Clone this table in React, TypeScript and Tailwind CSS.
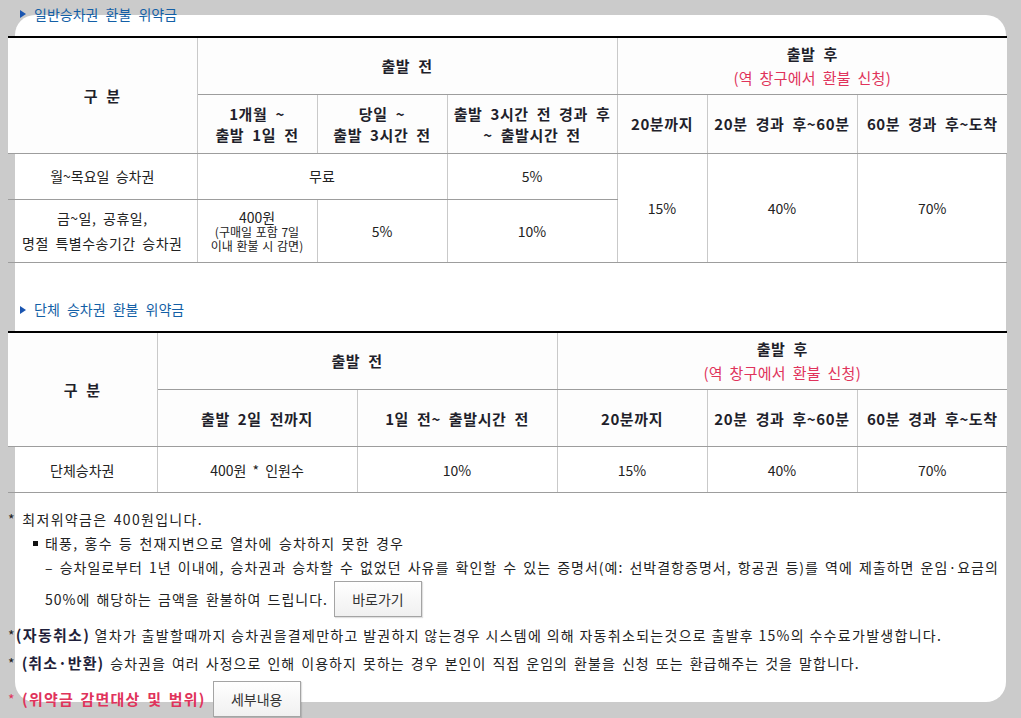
import React from 'react'

const font = { fontFamily: '"Noto Sans CJK KR", "Noto Sans", sans-serif' }

function Title({ text }: { text: string }) {
  return (
    <div className="flex items-center h-[20px] pl-[12px] text-[14px] text-[#135fa6] [word-spacing:4px]">
      <svg width="6" height="8" viewBox="0 0 6 8" className="mr-[8px]">
        <path d="M0 0 L6 4 L0 8 Z" fill="#1a55b0" />
      </svg>
      {text}
    </div>
  )
}

const th = 'border-x border-b border-x-[#c9c9c9] border-b-[#9d9d9d] bg-[#fdfdfd] text-[15px] font-bold text-[#1f1f2b] leading-[21px] text-center align-middle p-0 tracking-[0.6px] [word-spacing:4px]'
const td = 'border-x border-b border-x-[#c9c9c9] border-b-[#9d9d9d] text-[14px] text-[#222] leading-[22px] text-center align-middle p-0'

function AfterHead({ span }: { span: number }) {
  return (
    <th colSpan={span} className={th + ' border-r-0'}>
      출발 후
      <div className="mt-[3px] font-normal text-[#e0335b] tracking-[0.3px] [word-spacing:3px]">(역 창구에서 환불 신청)</div>
    </th>
  )
}

function Btn({ label }: { label: string }) {
  return (
    <button className="h-[36px] w-[88px] shrink-0 border border-[#a4a4a4] bg-gradient-to-b from-white to-[#f0f0f0] text-[14px] tracking-normal text-[#333] shadow-[1px_1px_1px_rgba(0,0,0,0.12)]">
      {label}
    </button>
  )
}

export default function App() {
  return (
    <div className="h-[718px] overflow-hidden bg-[#cbcbcb] px-[15px] pt-[15px]" style={font}>
      <div className="flow-root h-[687px] w-[991px] rounded-[20px] bg-white">
        <div className="-ml-[7px] -mt-[15px] w-[999px] pt-[4px] [word-spacing:3px]">
          <Title text="일반승차권 환불 위약금" />

          <table className="mt-[12px] w-[999px] border-collapse table-fixed border-t-2 border-t-black">
            <colgroup>
              <col className="w-[189px]" />
              <col className="w-[120px]" />
              <col className="w-[130px]" />
              <col className="w-[170px]" />
              <col className="w-[90px]" />
              <col className="w-[150px]" />
              <col className="w-[150px]" />
            </colgroup>
            <thead>
              <tr className="h-[57px]">
                <th rowSpan={2} className={th + ' border-l-0'}>구 분</th>
                <th colSpan={3} className={th}>출발 전</th>
                <AfterHead span={3} />
              </tr>
              <tr className="h-[59px]">
                <th className={th}>1개월 ~<br />출발 1일 전</th>
                <th className={th}>당일 ~<br />출발 3시간 전</th>
                <th className={th + ' [word-spacing:2px]'}>출발 3시간 전 경과 후<br />~ 출발시간 전</th>
                <th className={th}>20분까지</th>
                <th className={th}>20분 경과 후~60분</th>
                <th className={th + ' border-r-0'}>60분 경과 후~도착</th>
              </tr>
            </thead>
            <tbody>
              <tr className="h-[46px]">
                <td className={td + ' border-l-0'}>월~목요일 승차권</td>
                <td colSpan={2} className={td}>무료</td>
                <td className={td}>5%</td>
                <td rowSpan={2} className={td}>15%</td>
                <td rowSpan={2} className={td}>40%</td>
                <td rowSpan={2} className={td + ' border-r-0'}>70%</td>
              </tr>
              <tr className="h-[63px]">
                <td className={td + ' border-l-0 leading-[25px] tracking-[0.5px]'}>금~일, 공휴일,<br />명절 특별수송기간 승차권</td>
                <td className={td}>
                  <div className="leading-[16px]">400원</div>
                  <div className="text-[12px] leading-[14px] [word-spacing:1px]">(구매일 포함 7일<br />이내 환불 시 감면)</div>
                </td>
                <td className={td}>5%</td>
                <td className={td}>10%</td>
              </tr>
            </tbody>
          </table>

          <div className="mt-[37px]">
            <Title text="단체 승차권 환불 위약금" />
          </div>

          <table className="mt-[11px] w-[999px] border-collapse table-fixed border-t-2 border-t-black">
            <colgroup>
              <col className="w-[149px]" />
              <col className="w-[200px]" />
              <col className="w-[200px]" />
              <col className="w-[150px]" />
              <col className="w-[150px]" />
              <col className="w-[150px]" />
            </colgroup>
            <thead>
              <tr className="h-[58px]">
                <th rowSpan={2} className={th + ' border-l-0'}>구 분</th>
                <th colSpan={2} className={th}>출발 전</th>
                <AfterHead span={3} />
              </tr>
              <tr className="h-[57px]">
                <th className={th}>출발 2일 전까지</th>
                <th className={th}>1일 전~ 출발시간 전</th>
                <th className={th}>20분까지</th>
                <th className={th}>20분 경과 후~60분</th>
                <th className={th + ' border-r-0'}>60분 경과 후~도착</th>
              </tr>
            </thead>
            <tbody>
              <tr className="h-[46px]">
                <td className={td + ' border-l-0'}>단체승차권</td>
                <td className={td}>400원 * 인원수</td>
                <td className={td}>10%</td>
                <td className={td}>15%</td>
                <td className={td}>40%</td>
                <td className={td + ' border-r-0'}>70%</td>
              </tr>
            </tbody>
          </table>

          <div className="mt-[14px] text-[14px] text-[#222] [word-spacing:2px]">
            <p className="leading-[24px] tracking-[1.3px]">* 최저위약금은 400원입니다.</p>
            <p className="flex items-center leading-[24px] pl-[25px] tracking-[1.2px]">
              <span className="mr-[7px] inline-block h-[5px] w-[5px] bg-[#111]" />
              태풍, 홍수 등 천재지변으로 열차에 승차하지 못한 경우
            </p>
            <p className="leading-[24px] pl-[37px] tracking-[1px]">
              – 승차일로부터 1년 이내에, 승차권과 승차할 수 없었던 사유를 확인할 수 있는 증명서(예: 선박결항증명서, 항공권 등)를 역에 제출하면 운임·요금의
            </p>
            <div className="flex items-center gap-[6px] pl-[37px] mt-[2px] tracking-[1px]">
              <span>50%에 해당하는 금액을 환불하여 드립니다.</span>
              <Btn label="바로가기" />
            </div>
            <p className="mt-[4px] leading-[28px] tracking-[1.3px] [word-spacing:0px]">
              *<b className="text-[15px] text-[#1f1f3b]">(자동취소)</b> 열차가 출발할때까지 승차권을결제만하고 발권하지 않는경우 시스템에 의해 자동취소되는것으로 출발후 15%의 수수료가발생합니다.
            </p>
            <p className="leading-[28px] tracking-[1px]">
              * <b className="text-[15px] text-[#1f1f3b]">(취소·반환)</b> 승차권을 여러 사정으로 인해 이용하지 못하는 경우 본인이 직접 운임의 환불을 신청 또는 환급해주는 것을 말합니다.
            </p>
            <div className="flex items-center gap-[7px] mt-[4px] tracking-[1.2px]">
              <span className="text-[#e0335b]">* <b className="text-[15px]">(위약금 감면대상 및 범위)</b></span>
              <Btn label="세부내용" />
            </div>
          </div>
        </div>
      </div>
    </div>
  )
}
